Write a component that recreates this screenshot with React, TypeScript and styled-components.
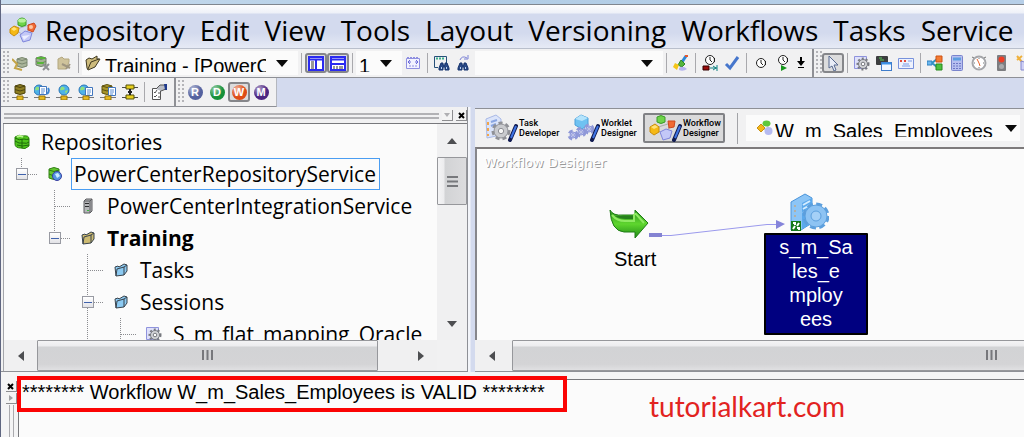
import React from "react";
import styled, { createGlobalStyle, css } from "styled-components";

const GlobalStyle = createGlobalStyle`
  *, *::before, *::after { box-sizing: border-box; }
  body { margin: 0; background: #d3daee; overflow: hidden; }
  button, select { font: inherit; color: inherit; border: 0; margin: 0; padding: 0; background: none; }
  svg { display: block; flex: none; }
`;

const ui = `"Open Sans", "Noto Sans", sans-serif`;
const arial = `"Liberation Sans", Arial, sans-serif`;
const face = "#f1f1f2";
const lavender = "#d3daee";
const paper = "#fbfbfb";
const edge = "#8e9096";

/* ---------- window frame ---------- */

const Window = styled.div`
  position: relative;
  display: flex;
  flex-direction: column;
  height: 100vh;
  min-height: 400px;
  overflow: hidden;
  background: ${lavender};
  border-left: 1px solid #5f6680;
  font-family: ${arial};
  font-size: 20px;
  color: #000;
`;

const TitleStrip = styled.div`
  flex: none;
  height: 5px;
  background: linear-gradient(90deg, #c9dcee, #b2cde6 45%, #b7cfe8);
  border-bottom: 1px solid #80868f;
`;

const MenuBar = styled.nav`
  flex: none;
  display: flex;
  align-items: center;
  gap: 8px;
  height: 44px;
  padding: 6px 0 0 8px;
  overflow: hidden;
  background: linear-gradient(#fdfdfe 0, #eef1f8 8px, ${lavender} 9px, ${lavender} 28px, #e6eaf5 43px);
  border-bottom: 1px solid #b9bfcc;
  font-family: ${ui};
  font-size: 28px;
  line-height: 36px;
`;

const MenuList = styled.div`
  display: flex;
  gap: 15px;
`;

const MenuItem = styled.button`
  flex: none;
`;

/* ---------- toolbars ---------- */

const Toolbar = styled.div<{ $short?: boolean }>`
  flex: none;
  display: flex;
  align-items: center;
  height: 29px;
  padding-left: 1px;
  overflow: hidden;
  background: ${face};
  border-bottom: 1px solid ${edge};
  ${(p) =>
    p.$short &&
    css`
      align-self: flex-start;
      padding-right: 4px;
      border-right: 1px solid #b4b7be;
    `}
`;

const Grip = styled.span`
  flex: none;
  width: 7px;
  height: 24px;
  background: radial-gradient(circle at 1px 1px, #b4b4b8 1px, transparent 1px) 1px 0 / 4px 4px;
`;

const Sep = styled.span`
  flex: none;
  width: 1px;
  height: 20px;
  margin: 0 3px;
  background: #a9a9ad;
`;

const GroupEdge = styled.span`
  flex: none;
  width: 2px;
  height: 28px;
  margin: 0 1px 0 4px;
  background: #8f9095;
`;

const ToolButton = styled.button<{ $pressed?: boolean; $narrow?: boolean }>`
  flex: none;
  display: grid;
  place-items: center;
  width: ${(p) => (p.$narrow ? 14 : 22)}px;
  height: 20px;
  ${(p) =>
    p.$pressed &&
    css`
      background: #dcdcdd;
      border: 2px solid #85868a;
      border-radius: 3px;
    `}
`;

const Combo = styled.label<{ $width: number }>`
  flex: none;
  display: flex;
  align-items: center;
  gap: 4px;
  width: ${(p) => p.$width}px;
  height: 24px;
  padding: 0 10px 0 3px;
  background: ${paper};
`;

const ComboClip = styled.span`
  flex: 1;
  min-width: 0;
  height: 18px;
  margin-right: 6px;
  overflow: hidden;
`;

const ComboSelect = styled.select`
  display: block;
  width: 100%;
  height: 24px;
  appearance: none;
  font-family: ${arial};
  font-size: 20px;
  line-height: 24px;
  outline: none;
`;

const Caret = () => (
  <svg width="12" height="7" viewBox="0 0 12 7">
    <path d="M0 0H12L6 7Z" fill="#0a0a0a" />
  </svg>
);

/* ---------- workspace ---------- */

const Workspace = styled.main`
  flex: 1;
  min-height: 0;
  display: flex;
`;

const Navigator = styled.section`
  flex: none;
  width: 467px;
  display: flex;
  flex-direction: column;
  padding-left: 2px;
  background: ${face};
  border-right: 1px solid ${edge};
  border-bottom: 1px solid ${edge};
`;

const PaneHeader = styled.header`
  flex: none;
  display: flex;
  align-items: center;
  gap: 3px;
  height: 17px;
  padding: 1px 0 0 1px;
  border-bottom: 1px solid #77787c;
`;

const PaneRails = styled.span`
  flex: 1;
  height: 6px;
  border: solid #b2b2b5;
  border-width: 2px 0;
`;

const MiniButton = styled.button`
  flex: none;
  display: grid;
  place-items: center;
  width: 11px;
  height: 11px;
  background: #f4f4f4;
  border: solid #8d8d90;
  border-width: 0 1px 1px 0;
`;

const PaneBody = styled.div`
  flex: 1;
  min-height: 0;
  display: grid;
  grid-template: minmax(0, 1fr) 31px / minmax(0, 1fr) 30px;
  border-left: 1px solid #a4a6ab;
`;

const Tree = styled.ul`
  margin: 0;
  padding: 2px 0 0 1px;
  overflow: hidden;
  list-style: none;
  background: ${paper};
  font-family: ${ui};
  font-size: 21px;
  line-height: 28px;
`;

const TreeRow = styled.li`
  display: flex;
  height: 32px;
  align-items: center;
  white-space: nowrap;
`;

const Slot = styled.span`
  flex: none;
  display: grid;
  place-items: center;
  width: 33px;
  height: 32px;
  > * { grid-area: 1 / 1; }
`;

const Expander = styled.button`
  display: grid;
  place-items: center;
  width: 12px;
  height: 12px;
  background: linear-gradient(#fff, #e2e2e6);
  border: 1px solid #989aa2;
  &::before {
    content: "";
    width: 8px;
    height: 1px;
    background: #3f62ac;
  }
`;

const TreeLabel = styled.span<{ $selected?: boolean; $bold?: boolean }>`
  height: 32px;
  padding: 1px 3px 1px 2px;
  border: 1px solid ${(p) => (p.$selected ? "#4a9df2" : "transparent")};
  font-weight: ${(p) => (p.$bold ? 700 : 400)};
`;

/* ---------- scroll bars ---------- */

const ScrollTrack = styled.div<{ $vertical?: boolean }>`
  display: flex;
  flex-direction: ${(p) => (p.$vertical ? "column" : "row")};
  justify-content: flex-start;
  min-width: 0;
  overflow: hidden;
  background: #f0f0f1;
`;

const ScrollArrow = styled.button<{ $end?: boolean; $wide?: boolean }>`
  flex: none;
  display: grid;
  place-items: center;
  min-height: 31px;
  width: ${(p) => (p.$wide ? 37 : 33)}px;
  ${(p) => p.$wide && "padding-right: 4px;"}
  ${(p) => p.$end && "margin-left: auto;"}
`;

const ScrollArrowV = styled.button<{ $end?: boolean }>`
  flex: none;
  display: grid;
  place-items: center;
  height: 33px;
  ${(p) => p.$end && "margin-top: auto;"}
`;

const Thumb = styled.div<{ $length: number; $vertical?: boolean }>`
  flex: none;
  display: grid;
  place-items: center;
  border: 1px solid #96979b;
  border-radius: 1px;
  ${(p) =>
    p.$vertical
      ? css`
          height: ${p.$length}px;
          background: linear-gradient(90deg, #f4f4f5 0, #ececee 6px, #d2d3d5 7px, #dcdcde);
        `
      : css`
          width: ${p.$length}px;
          background: linear-gradient(#f4f4f5 0, #ececee 5px, #d2d3d5 6px, #d4d4d6 80%, #e0e0e2);
        `}
`;

const GripMarks = ({ vertical }: { vertical?: boolean }) => (
  <svg width="13" height="13" viewBox="0 0 13 13" stroke="#77787c" strokeWidth="2">
    {vertical ? <path d="M1 2H12M1 6.500H12M1 11H12" /> : <path d="M2 1V11M6.500 1V11M11 1V11" />}
  </svg>
);

const Tri = ({ dir }: { dir: "up" | "down" | "left" | "right" }) => {
  const shapes = {
    up: "M1 9H11L6 3Z",
    down: "M1 3H11L6 9Z",
    left: "M9 1V11L3 6Z",
    right: "M3 1V11L9 6Z",
  };
  return (
    <svg width="12" height="12" viewBox="0 0 12 12">
      <path d={shapes[dir]} fill="#4d4e51" />
    </svg>
  );
};

/* ---------- designer ---------- */

const Splitter = styled.div`
  flex: none;
  width: 7px;
  background: linear-gradient(90deg, #f3f5fa 2px, ${lavender} 3px);
`;

const Designer = styled.section`
  flex: 1;
  min-width: 0;
  display: grid;
  grid-template-rows: 38px minmax(0, 1fr) 31px;
  margin-top: 1px;
  border-top: 1px solid ${edge};
  border-bottom: 1px solid ${edge};
`;

const DesignerBar = styled.div`
  display: flex;
  align-items: center;
  min-width: 0;
  overflow: hidden;
  padding: 0 4px;
  background: ${face};
`;

const ModeButton = styled.button<{ $pressed?: boolean }>`
  flex: none;
  display: flex;
  align-items: center;
  gap: 1px;
  width: 82px;
  height: 30px;
  padding: 0 2px 0 4px;
  text-align: left;
  font-family: Roboto, sans-serif;
  font-size: 9px;
  font-weight: 500;
  line-height: 10px;
  border: 2px solid transparent;
  border-radius: 2px;
  ${(p) =>
    p.$pressed &&
    css`
      background: #dadadb;
      border-color: #808185;
    `}
`;

const DesignerSep = styled.span`
  flex: none;
  width: 1px;
  height: 31px;
  margin: 0 8px 0 12px;
  background: #a2a3a7;
`;

const WorkflowCombo = styled.label`
  flex: 1;
  display: flex;
  align-items: center;
  gap: 2px;
  height: 26px;
  padding: 0 3px 0 11px;
  background: ${paper};
`;

const Canvas = styled.div`
  position: relative;
  overflow: hidden;
  background: ${paper};
  border-top: 2px solid #7d7a7b;
  border-left: 2px solid #86868b;
`;

const CanvasTitle = styled.span`
  position: absolute;
  left: 7px;
  top: 4px;
  font-family: "DejaVu Sans", sans-serif;
  font-size: 13px;
  line-height: 20px;
  color: #fff;
  text-shadow: 1px 1px 0 #9a9a9a;
`;

const Node = styled.div<{ $x: number; $y: number }>`
  position: absolute;
  left: ${(p) => p.$x}px;
  top: ${(p) => p.$y}px;
  display: flex;
  flex-direction: column;
  align-items: center;
`;

const StartLabel = styled.span`
  margin-top: 8px;
  padding-left: 12px;
  line-height: 24px;
`;

const TaskPicture = styled.span`
  padding-right: 15px;
`;

const TaskLabel = styled.span`
  width: 104px;
  height: 102px;
  border: 2px solid #000;
  border-radius: 1px;
  background: #000080;
  color: #fff;
  line-height: 24px;
  text-align: center;
  white-space: pre-line;
`;

const Link = styled.svg`
  position: absolute;
  left: 172px;
  top: 69px;
`;

/* ---------- output window ---------- */

const Output = styled.section`
  flex: none;
  display: flex;
  height: 65px;
  padding-top: 7px;
  background: #f4f4f5;
`;

const OutputRail = styled.div`
  flex: none;
  display: flex;
  flex-direction: column;
  align-items: center;
  gap: 1px;
  width: 17px;
  padding: 2px 0 0 3px;
`;

const RailLines = styled.span`
  flex: 1;
  width: 5px;
  border: solid #aaaaae;
  border-width: 0 1px;
`;

const OutputText = styled.output`
  flex: 1;
  min-width: 0;
  padding: 0 3px;
  background: ${paper};
  border-top: 1px solid #77787c;
  border-left: 1px solid #77787c;
  line-height: 24px;
  white-space: nowrap;
`;

const Highlight = styled.div`
  position: absolute;
  left: 16px;
  bottom: 25px;
  width: 550px;
  height: 36px;
  border: 4px solid #fb0404;
`;

const Credit = styled.span`
  position: absolute;
  left: 648px;
  bottom: 15px;
  font-family: Lato, sans-serif;
  font-size: 28px;
  line-height: 32px;
  color: #e2231f;
`;

/* ---------- icons ---------- */

const I = ({ children, size = 16 }: { children: React.ReactNode; size?: number }) => (
  <svg width={size} height={size} viewBox="0 0 16 16" fill="none">
    {children}
  </svg>
);

const Cyl = ({ fill, line, x = 0, y = 0 }: { fill: string; line: string; x?: number; y?: number }) => (
  <g transform={`translate(${x} ${y})`}>
    <path d="M2 3Q7 0 12 3V10Q7 13 2 10Z" fill={fill} stroke={line} />
    <path d="M2 3Q7 6 12 3M2 6.500Q7 9.500 12 6.500" stroke={line} />
  </g>
);

const AppLogo = ({ size = 28 }: { size?: number }) => (
  <svg width={size} height={size} viewBox="0 0 28 28">
    <path d="M8 13L20 9L17 21L7 14" fill="none" stroke="#b0b4c4" />
    <path d="M9 4Q13 0 17 4V9Q13 12 9 9Z" fill="#6fd449" stroke="#3d9c2c" />
    <ellipse cx="13" cy="4.500" rx="4" ry="2" fill="#b7f29b" />
    <path d="M1 13L5 10L10 12L9 17L5 20L1 17Z" fill="#f5b915" stroke="#c98d0c" />
    <path d="M2 13L5 11L8 13L5 15Z" fill="#ffe27a" />
    <path d="M19 9L25 7L27 10L24 16L19 14Z" fill="#f06a35" stroke="#cc481f" />
    <circle cx="22" cy="11" r="2" fill="#ffc5a0" />
    <path d="M11 19L16 15L23 17L21 24L14 26Z" fill="#c3c8f7" stroke="#7f86dc" />
    <path d="M13 20L21 19L15 24Z" fill="#eceeff" />
  </svg>
);

const Connect = () => (
  <I>
    <Cyl fill="#aab59a" line="#7b8870" x={3} y={1} />
    <path d="M0 4L5 9L3 13L10 15" stroke="#c3a448" strokeWidth="2" />
  </I>
);
const Disconnect = () => (
  <I>
    <Cyl fill="#a4b394" line="#6f8068" y={0} />
    <path d="M3 3H11M3 8H10" stroke="#58b53a" strokeWidth="2" />
    <path d="M9 9L15 15M15 9L9 15" stroke="#8f9093" strokeWidth="2" />
  </I>
);
const FolderGray = () => (
  <I>
    <path d="M2 4L6 2L8 4H13V7L10 14H2Z" fill="#cfc39b" stroke="#b3a77f" />
    <path d="M6 9L14 13M10 14L14 9" stroke="#9f9680" strokeWidth="2" />
  </I>
);
const FolderOpen = () => (
  <I>
    <path d="M2 13L1 5L4 3L7 4L12 1V4L15 4L10 12L3 15Z" fill="#cdbb7c" stroke="#3f3820" />
    <path d="M3 14L6 7L14 4" stroke="#3f3820" />
  </I>
);
const Folder = ({ fill }: { fill: string }) => (
  <I>
    <path d="M2 5L5 4L6 5L11 2L14 3V9L11 13L3 14Z" fill={fill} stroke="#39434c" />
    <path d="M3 14L4 7L11 5L14 3M11 5V13" stroke="#39434c" />
  </I>
);
const PaneLeft = () => (
  <I>
    <path d="M1 2H15V15H1Z" fill="#fff" stroke="#2a2af0" strokeWidth="2" />
    <path d="M1 4.500H15M8 4V15" stroke="#2a2af0" strokeWidth="2" />
    <path d="M3 7H6M3 9H6M3 11H6M3 13H6" stroke="#333" />
  </I>
);
const PaneBottom = () => (
  <I>
    <path d="M1 2H15V15H1Z" fill="#fff" stroke="#2a2af0" strokeWidth="2" />
    <path d="M1 4.500H15M1 9H15" stroke="#2a2af0" strokeWidth="2" />
    <path d="M4 11V14M7 11V14M10 11V14M12 11V14" stroke="#333" />
  </I>
);
const FitPage = () => (
  <I>
    <path d="M1.500 3.500H14.500V13.500H1.500Z" fill="#f3f3ff" stroke="#8f8fe0" />
    <path d="M2 2.500H14" stroke="#8f8fe0" strokeDasharray="2 1" />
    <path d="M3 7H6M5 5L3 7L5 9M13 7H10M11 5L13 7L11 9" stroke="#6b6bd8" />
    <path d="M4 11H12" stroke="#8f8fe0" strokeDasharray="2 1" />
  </I>
);
const Binoc = () => (
  <path d="M7 8H9V10H11V8H13L15 13V15H11V12H9V15H5V13Z" fill="#2b4a86" stroke="#17346e" />
);
const FindWindow = () => (
  <I>
    <path d="M.500 1.500H12.500V8M.500 1.500V12.500H4" fill="none" stroke="#27507a" />
    <path d="M2 3.500H11" stroke="#3bb08c" strokeWidth="2" strokeDasharray="2 1" />
    <Binoc />
    <path d="M7 13H8M12 13H13" stroke="#b9d2f5" strokeWidth="2" />
  </I>
);
const FindNext = () => (
  <I>
    <path d="M4 5Q6 0 11 3M12 0V4H8" stroke="#7c83d6" />
    <g transform="translate(-3 0)">
      <Binoc />
      <path d="M7 13H8M12 13H13" stroke="#b9d2f5" strokeWidth="2" />
    </g>
  </I>
);
const Brush = () => (
  <I>
    <path d="M13 1L9 7" stroke="#2c87d8" strokeWidth="3" />
    <path d="M12 1L15 1" stroke="#e5572d" strokeWidth="2" />
    <path d="M8 5L12 9L9 12L5 10Z" fill="#54b53c" stroke="#2f8527" />
    <path d="M2 8L6 10L4 15L0 12Z" fill="#f5c518" />
    <path d="M6 13Q10 10 14 14Q10 17 6 15Z" fill="#b5b4ee" />
  </I>
);
const ClockFace = ({ y = 0, r = 4.5 }: { y?: number; r?: number }) => (
  <g transform={`translate(0 ${y})`}>
    <circle cx="8" cy="8" r={r} fill="#fff" stroke="#222" strokeWidth="1" />
    <path d="M8 5V8L10 10M12.500 6V10" stroke="#222" />
  </g>
);
const Schedule = () => (
  <I>
    <ClockFace y={-3} />
    <path d="M1 11H7V15H1Z" fill="#9b0d0d" stroke="#300" />
    <path d="M8 13H15M11 11L14 13L11 15M15 10V16" stroke="#0e8080" />
  </I>
);
const Check = () => (
  <I>
    <path d="M2 9L6 13L14 2" stroke="#4676cc" strokeWidth="3" />
  </I>
);
const Clock = () => (
  <I>
    <ClockFace />
  </I>
);
const ClockPlay = () => (
  <I>
    <ClockFace y={-3} />
    <path d="M6 10L12 13L6 16Z" fill="#17971c" />
  </I>
);
const Download = () => (
  <svg width="12" height="16" viewBox="2 0 12 16">
    <path d="M8 2V9" stroke="#000" strokeWidth="2" />
    <path d="M4 6H12L8 11Z" fill="#000" />
    <path d="M5 12.500H11" stroke="#000" />
  </svg>
);
const Pointer = () => (
  <I>
    <path d="M4 1V13L7 11L9 16L11 15L9 10H13Z" fill="#e9edf7" stroke="#56688f" />
  </I>
);
const Gear = ({ x = 8, y = 8, fill = "#d3d4d8", line = "#77797f" }) => (
  <g transform={`translate(${x} ${y})`}>
    <circle r="5.500" stroke={line} strokeWidth="2" strokeDasharray="2 2" />
    <circle r="4.500" fill={fill} stroke={line} />
    <circle r="1.800" fill="#fff" stroke={line} />
  </g>
);
const SessionIcon = () => (
  <I>
    <path d="M.500 1.500H12.500V13.500H.500Z" fill="#dfe1fb" stroke="#8f93dd" />
    <Gear x={9} y={9} />
  </I>
);
const Command = () => (
  <I>
    <rect x="0" y="1" width="12" height="9" rx="1" fill="#3c3d3f" />
    <path d="M3 3H6M4 5H8" stroke="#58d058" />
    <rect x="5.500" y="7.500" width="10" height="8" fill="#f0f7ff" stroke="#3f7ccb" />
    <path d="M6 8.500H15" stroke="#3b92e6" strokeWidth="2" />
  </I>
);
const Email = () => (
  <I>
    <path d="M.500 3.500H15.500V13.500H.500Z" fill="#eef2fd" stroke="#7892dc" />
    <path d="M2 6H4M6 6H8" stroke="#e14a3b" strokeWidth="2" />
    <path d="M10 6H14M5 9H11M4 11H12" stroke="#7b9ce6" />
  </I>
);
const Decision = () => (
  <I>
    <path d="M0 6H5V10H0Z" fill="#6bb7ef" stroke="#2e7fbb" />
    <path d="M5 8L10 4M5 8L10 12" stroke="#2f90c4" strokeWidth="2" />
    <path d="M9 1H15V7H9Z" fill="#f37b32" stroke="#cf5212" />
    <path d="M9 9H15V15H9Z" fill="#4dc03f" stroke="#268a1d" />
  </I>
);
const Calc = () => (
  <I>
    <rect x="2.500" y=".500" width="11" height="15" rx="1" fill="#b7bff0" stroke="#7a84cc" />
    <path d="M4 4H12" stroke="#5e9ee0" strokeWidth="3" />
    <path d="M4 8.500H12M4 11H12M4 13.500H12" stroke="#6d76c4" strokeWidth="1" strokeDasharray="2 1" />
  </I>
);
const Timer = () => (
  <I>
    <circle cx="8" cy="8" r="6.500" fill="#fff" stroke="#a5a6aa" strokeWidth="2" />
    <path d="M8 8L6 4M8 8L9 11" stroke="#e8622b" />
    <path d="M8 3V4M13 8H12M8 13V12M3 8H4M1 2L3 3M15 2L13 3" stroke="#777" />
  </I>
);
const Light = () => (
  <I>
    <rect x="4" y="0" width="9" height="16" rx="1" fill="#7c7d80" />
    <circle cx="8.500" cy="4.500" r="3" fill="#ee3d25" />
    <circle cx="8.500" cy="11.500" r="2.500" fill="#a9aaac" />
  </I>
);
const Wand = () => (
  <I>
    <path d="M2 1L7 7M7 1L2 5" stroke="#efb13d" strokeWidth="2" />
    <path d="M6 6L16 9V15H6Z" fill="#cfd0f4" stroke="#8488d0" />
  </I>
);

const Pipe = () => (
  <>
    <path d="M0 13.500H16" stroke="#77787b" />
    <path d="M5 12H11V16H5Z" fill="#e6b91e" stroke="#96760f" />
  </>
);
const Globe = ({ x = 7, y = 6, r = 5 }) => (
  <g transform={`translate(${x} ${y})`}>
    <circle r={r} fill="#4eb2e8" stroke="#2a76b8" />
    <path d="M-3 -3Q0 -4 1 -1Q-2 1 -4 0Z" fill="#8fe07c" />
    <path d="M1 1L4 0L2 4Z" fill="#8fe07c" />
  </g>
);
const Db = () => (
  <I>
    <g transform="translate(1 -1)">
      <Cyl fill="#8d7d21" line="#4e450f" />
    </g>
    <Pipe />
  </I>
);
const Doc = ({ x = 7, y = 3 }) => (
  <g transform={`translate(${x} ${y})`}>
    <path d="M.500 .500H7.500V8.500H.500Z" fill="#fff" stroke="#4176be" />
    <path d="M2 3H6M2 5H6M2 7H5" stroke="#5c8fd3" />
  </g>
);
const GlobeDocs = () => (
  <I>
    <Globe x={5} />
    <Doc x={5} y={2} />
    <Pipe />
    <path d="M14 4Q16 7 13 10" stroke="#3b86d4" strokeWidth="2" />
  </I>
);
const GlobePipe = () => (
  <I>
    <Globe x={8} />
    <Pipe />
  </I>
);
const GlobeDoc = () => (
  <I>
    <Globe x={6} />
    <Doc x={7} y={3} />
    <Pipe />
  </I>
);
const DbDoc = () => (
  <I>
    <g transform="translate(0 -1)">
      <Cyl fill="#a8962a" line="#5e5312" />
    </g>
    <Doc x={8} y={3} />
    <Pipe />
  </I>
);
const Beam = () => (
  <I>
    <path d="M0 3.500H16M0 13.500H16" stroke="#4b4b4b" />
    <path d="M4 1H12V5H4ZM4 11H12V15H4Z" fill="#e6cf1e" stroke="#55500b" />
    <path d="M8 5V11M6 8H10" stroke="#222" strokeWidth="2" />
  </I>
);
const Props = () => (
  <I>
    <path d="M1.500 4.500H9.500V15.500H1.500Z" fill="#fff" stroke="#555" />
    <path d="M3 8L4 9L6 6M3 12L4 13L6 11M7 9H9M7 13H9" stroke="#555" />
    <path d="M5 5L9 1L15 1V5L10 7" fill="#b9bcc4" stroke="#555" />
    <path d="M13 0H16V6H14" fill="#1f3a8c" />
  </I>
);

const Badge = styled.span<{ $color: string }>`
  display: grid;
  place-items: center;
  width: 15px;
  height: 15px;
  border-radius: 8px;
  background: radial-gradient(circle at 5px 4px, #ffffff90, transparent 8px), ${(p) => p.$color};
  color: #fff;
  font-size: 11px;
  font-weight: 700;
  line-height: 15px;
`;

const RepoRoot = () => (
  <I>
    <path d="M1 3Q5 0 9 2Q15 1 15 5V12Q11 16 7 14Q1 14 1 10Z" fill="#4fc51c" stroke="#2b7f0e" />
    <path d="M1 4Q5 7 10 5Q13 6 15 5M1 7Q5 10 9 9Q13 10 15 8M3 11Q8 13 15 11M8 5V14" stroke="#1d6b0a" />
    <path d="M3 3Q6 1 9 3" stroke="#b9f58f" strokeWidth="2" />
  </I>
);
const RepoService = () => (
  <I>
    <path d="M2 3Q7 0 12 3V12Q7 15 2 12Z" fill="#62c62d" stroke="#35831a" />
    <path d="M2 4Q7 7 12 4M2 8Q5 10 8 9" stroke="#2b7a12" />
    <circle cx="10" cy="10" r="4.500" fill="#5495e0" stroke="#3a3fa0" />
    <path d="M8 8L11 7L13 10L10 12Z" fill="#c9ecff" />
  </I>
);
const Server = () => (
  <I>
    <path d="M4 3L6 1H12V13L10 15H4Z" fill="#b5b6b9" stroke="#5c5d60" />
    <path d="M4 3H10V15M10 3L12 1" stroke="#5c5d60" />
    <path d="M5 5.500H9M5 8.500H9" stroke="#2d2d2f" />
    <path d="M7 12.500H9" stroke="#36b93a" />
  </I>
);

const Pen = () => (
  <g>
    <path d="M27 27L33 13" stroke="#101a50" strokeWidth="4" strokeLinecap="round" />
    <path d="M28 25L33 13" stroke="#3f74e4" strokeWidth="2" />
  </g>
);
const BigGear = ({ x, y, r, fill, line }: { x: number; y: number; r: number; fill: string; line: string }) => (
  <g transform={`translate(${x} ${y})`}>
    <circle r={r} fill="none" stroke={line} strokeWidth="3" strokeDasharray="4 3" />
    <circle r={r - 1} fill={fill} stroke={line} />
    <circle r={r / 3} fill="#f6f6f6" stroke={line} />
  </g>
);
const ModeSvg = ({ children }: { children: React.ReactNode }) => (
  <svg width="33" height="28" viewBox="2 1 33 28" fill="none">
    {children}
    <Pen />
  </svg>
);
const TaskMode = () => (
  <ModeSvg>
    <path d="M3 6L13 2L18 6V22L4 25Z" fill="#dbe4fa" stroke="#a9b9e6" />
    <path d="M5 9V12M5 15V18M5 21V23" stroke="#f2a549" strokeWidth="2" />
    <path d="M8 9L14 7M8 13L13 11" stroke="#8aa6e2" strokeWidth="2" />
    <BigGear x={18} y={18} r={8} fill="#c9cace" line="#909197" />
  </ModeSvg>
);
const WorkletMode = () => (
  <ModeSvg>
    <path d="M10 6L16 2L23 5V12L17 16L10 12Z" fill="#6fc2f2" stroke="#4a9fda" />
    <path d="M10 6L17 8L23 5L16 2Z" fill="#b5e4fc" />
    <BigGear x={8} y={22} r={4} fill="#bcc3f0" line="#8f98d8" />
    <BigGear x={16} y={19} r={4} fill="#bcc3f0" line="#8f98d8" />
    <BigGear x={24} y={16} r={4} fill="#bcc3f0" line="#8f98d8" />
  </ModeSvg>
);
const WorkflowMode = () => (
  <ModeSvg>
    <path d="M8 15L24 10L18 23Z" stroke="#aaa" />
    <path d="M10 4Q14 1 18 4V9Q14 12 10 9Z" fill="#6fd449" stroke="#3d9c2c" />
    <path d="M3 14L8 11L12 14V19L7 22L3 19Z" fill="#f5b915" stroke="#c98d0c" />
    <path d="M4 14L8 12L11 14L7 16Z" fill="#ffe27a" />
    <path d="M21 8L28 8L27 14L22 15Z" fill="#f06a35" stroke="#cc481f" />
    <path d="M13 19L19 16L25 18L23 25L16 27Z" fill="#c3c8f7" stroke="#7f86dc" />
  </ModeSvg>
);
const WorkflowIcon = () => (
  <I>
    <path d="M5 8L10 3L12 11Z" stroke="#aaa" />
    <ellipse cx="9.500" cy="3.500" rx="4" ry="3" fill="#5fc83c" />
    <path d="M0 8L4 4L8 8L4 12Z" fill="#f3b61a" stroke="#c88f10" />
    <circle cx="11.500" cy="11" r="4" fill="#b5baf0" />
  </I>
);

const StartIcon = () => (
  <svg width="40" height="30" viewBox="0 0 40 30">
    <defs>
      <linearGradient id="go" x1="0" y1="0" x2="0" y2="1">
        <stop offset="0" stopColor="#2c9320" />
        <stop offset=".5" stopColor="#5fd62e" />
        <stop offset="1" stopColor="#1f8a16" />
      </linearGradient>
    </defs>
    <path d="M1 1Q4 7 14 6H26V1L39 14L26 29V23H15Q2 22 1 1Z" fill="url(#go)" stroke="#1f7d17" />
    <path d="M3 6Q8 12 16 12H25V6Q27 4 27 5L35 14" fill="none" stroke="#8eea62" strokeWidth="2" />
    <path d="M14 7H24V10H17Q10 10 6 7Z" fill="#26801c" />
  </svg>
);

const TaskIcon = () => (
  <svg width="40" height="40" viewBox="0 0 40 40">
    <path d="M2 9L16 1L23 5V30L12 37H2Z" fill="#8cc5f6" stroke="#4a94da" />
    <path d="M13 10L23 5V30L13 36Z" fill="#5ba9ec" />
    <path d="M14 12L21 8M14 16L21 12M14 20L20 17" stroke="#d4ecff" strokeWidth="2" />
    <path d="M6 12V26" stroke="#d79a55" strokeDasharray="2 3" />
    <circle cx="27" cy="23" r="12" fill="none" stroke="#5c9fdd" strokeWidth="3" strokeDasharray="6 3.400" />
    <circle cx="27" cy="23" r="11" fill="#8dc3f3" stroke="#5c9fdd" />
    <circle cx="27" cy="23" r="5" fill="#a5d0f7" stroke="#5c9fdd" />
    <rect x="2" y="28" width="10" height="10" fill="#157a1b" />
    <path d="M4 30H6V32M10 30L8 33M4 36L6 33M8 35H10V37" stroke="#fff" fill="none" strokeWidth="2" />
  </svg>
);

/* ---------- data ---------- */

const menus = ["Repository", "Edit", "View", "Tools", "Layout", "Versioning", "Workflows", "Tasks", "Service"];

type Guide = "blank" | "line" | "tee" | "minus" | "minusOn";
type RowData = { label: string; icon: React.ReactNode; guides: Guide[]; bold?: boolean; selected?: boolean };

const rows: RowData[] = [
  { label: "Repositories", icon: <RepoRoot />, guides: [] },
  { label: "PowerCenterRepositoryService", icon: <RepoService />, guides: ["minus"], selected: true },
  { label: "PowerCenterIntegrationService", icon: <Server />, guides: ["blank", "tee"] },
  { label: "Training", icon: <Folder fill="#cdbb72" />, guides: ["blank", "minus"], bold: true },
  { label: "Tasks", icon: <Folder fill="#8ccaf2" />, guides: ["blank", "blank", "tee"] },
  { label: "Sessions", icon: <Folder fill="#8ccaf2" />, guides: ["blank", "blank", "minusOn"] },
  { label: "S_m_flat_mapping_Oracle", icon: <SessionIcon />, guides: ["blank", "blank", "line", "tee"] },
];

const guidePath: Record<Guide, string> = {
  blank: "",
  line: "M16.500 0V32",
  tee: "M16.500 0V32M17 16.500H33",
  minus: "M16.500 0V16M17 16.500H33",
  minusOn: "M16.500 0V32M17 16.500H33",
};

const TreeGuide = ({ kind }: { kind: Guide }) => (
  <Slot>
    <svg width="33" height="32" viewBox="0 0 33 32" fill="none">
      <path d={guidePath[kind]} stroke="#8b8c90" strokeDasharray="1 1" />
    </svg>
    {kind.startsWith("minus") && <Expander aria-label="Collapse" />}
  </Slot>
);

type Tool = { name: string; icon: React.ReactNode; pressed?: boolean; narrow?: boolean };
const Tools = ({ items }: { items: Tool[] }) => (
  <>
    {items.map((t) => (
      <ToolButton key={t.name} aria-label={t.name} $pressed={t.pressed} $narrow={t.narrow}>
        {t.icon}
      </ToolButton>
    ))}
  </>
);

const ComboBox = ({ name, value, icon, width }: { name: string; value: string; icon?: React.ReactNode; width: number }) => (
  <Combo $width={width}>
    {icon}
    <ComboClip>
      <ComboSelect aria-label={name}>
        <option>{value}</option>
      </ComboSelect>
    </ComboClip>
    <Caret />
  </Combo>
);

export default function App() {
  return (
    <Window>
      <GlobalStyle />
      <TitleStrip />
      <MenuBar>
        <AppLogo />
        <MenuList>
          {menus.map((m) => (
            <MenuItem key={m}>{m}</MenuItem>
          ))}
        </MenuList>
      </MenuBar>

      <Toolbar>
        <Grip />
        <Tools
          items={[
            { name: "Connect", icon: <Connect /> },
            { name: "Disconnect", icon: <Disconnect /> },
            { name: "Close folder", icon: <FolderGray /> },
          ]}
        />
        <Sep />
        <ComboBox name="Folder" value="Training - [PowerCenter]" icon={<FolderOpen />} width={216} />
        <Sep />
        <Tools
          items={[
            { name: "Navigator", icon: <PaneLeft />, pressed: true },
            { name: "Output", icon: <PaneBottom />, pressed: true },
          ]}
        />
        <Sep />
        <ComboBox name="Zoom" value="1" width={46} />
        <Tools items={[{ name: "Fit", icon: <FitPage /> }]} />
        <Sep />
        <Tools
          items={[
            { name: "Find in workspace", icon: <FindWindow /> },
            { name: "Find next", icon: <FindNext /> },
          ]}
        />
        <ComboBox name="Find" value="" width={188} />
        <Sep />
        <Tools items={[{ name: "Format", icon: <Brush /> }]} />
        <Sep />
        <Tools
          items={[
            { name: "Scheduler", icon: <Schedule /> },
            { name: "Validate", icon: <Check /> },
          ]}
        />
        <Sep />
        <Tools
          items={[
            { name: "Schedule", icon: <Clock /> },
            { name: "Start at time", icon: <ClockPlay /> },
            { name: "Download", icon: <Download />, narrow: true },
          ]}
        />
        <GroupEdge />
        <Grip />
        <Tools items={[{ name: "Select", icon: <Pointer />, pressed: true }]} />
        <Sep />
        <Tools
          items={[
            { name: "Session", icon: <SessionIcon /> },
            { name: "Command", icon: <Command /> },
            { name: "Email", icon: <Email /> },
          ]}
        />
        <Sep />
        <Tools
          items={[
            { name: "Decision", icon: <Decision /> },
            { name: "Assignment", icon: <Calc /> },
            { name: "Timer", icon: <Timer /> },
            { name: "Control", icon: <Light /> },
            { name: "Event", icon: <Wand /> },
          ]}
        />
      </Toolbar>

      <Toolbar $short>
        <Grip />
        <Tools
          items={[
            { name: "Repository", icon: <Db /> },
            { name: "Shared objects", icon: <GlobeDocs /> },
            { name: "Web service", icon: <GlobePipe /> },
            { name: "Web document", icon: <GlobeDoc /> },
            { name: "Repository document", icon: <DbDoc /> },
            { name: "Connections", icon: <Beam /> },
          ]}
        />
        <Sep />
        <Tools items={[{ name: "Properties", icon: <Props /> }]} />
        <GroupEdge />
        <Grip />
        <Tools
          items={[
            { name: "Repository Manager", icon: <Badge $color="#54619f">R</Badge> },
            { name: "Designer", icon: <Badge $color="#17913a">D</Badge> },
            { name: "Workflow Manager", icon: <Badge $color="#df4c16">W</Badge>, pressed: true },
            { name: "Workflow Monitor", icon: <Badge $color="#4c2582">M</Badge> },
          ]}
        />
      </Toolbar>

      <Workspace>
        <Navigator>
          <PaneHeader>
            <PaneRails />
            <MiniButton aria-label="Menu">
              <svg width="6" height="4" viewBox="0 0 6 4">
                <path d="M0 0H6L3 4Z" fill="#b0b0b3" />
              </svg>
            </MiniButton>
            <MiniButton aria-label="Close">
              <svg width="7" height="7" viewBox="0 0 7 7">
                <path d="M1 1L6 6M6 1L1 6" stroke="#000" strokeWidth="2" />
              </svg>
            </MiniButton>
          </PaneHeader>
          <PaneBody>
            <Tree>
              {rows.map((r) => (
                <TreeRow key={r.label}>
                  {r.guides.map((g, i) => (
                    <TreeGuide key={i} kind={g} />
                  ))}
                  <Slot>{r.icon}</Slot>
                  <TreeLabel $bold={r.bold} $selected={r.selected}>
                    {r.label}
                  </TreeLabel>
                </TreeRow>
              ))}
            </Tree>
            <ScrollTrack $vertical>
              <ScrollArrowV aria-label="Scroll up">
                <Tri dir="up" />
              </ScrollArrowV>
              <Thumb $vertical $length={48}>
                <GripMarks vertical />
              </Thumb>
              <ScrollArrowV $end aria-label="Scroll down">
                <Tri dir="down" />
              </ScrollArrowV>
            </ScrollTrack>
            <ScrollTrack>
              <ScrollArrow aria-label="Scroll left">
                <Tri dir="left" />
              </ScrollArrow>
              <Thumb $length={341}>
                <GripMarks />
              </Thumb>
              <ScrollArrow $end aria-label="Scroll right">
                <Tri dir="right" />
              </ScrollArrow>
            </ScrollTrack>
          </PaneBody>
        </Navigator>

        <Splitter />

        <Designer>
          <DesignerBar>
            <ModeButton>
              <TaskMode />
              <span>
                Task
                <br />
                Developer
              </span>
            </ModeButton>
            <ModeButton>
              <WorkletMode />
              <span>
                Worklet
                <br />
                Designer
              </span>
            </ModeButton>
            <ModeButton $pressed>
              <WorkflowMode />
              <span>
                Workflow
                <br />
                Designer
              </span>
            </ModeButton>
            <DesignerSep />
            <WorkflowCombo>
              <WorkflowIcon />
              <ComboClip>
                <ComboSelect aria-label="Workflow">
                  <option>W_m_Sales_Employees</option>
                </ComboSelect>
              </ComboClip>
              <Caret />
            </WorkflowCombo>
          </DesignerBar>
          <Canvas>
            <CanvasTitle>Workflow Designer</CanvasTitle>
            <Link width="142" height="24" viewBox="0 0 142 24">
              <rect x="0" y="15" width="13" height="4" fill="#8483d2" />
              <path d="M13 17.500H22L118 6.500H130" fill="none" stroke="#9b9aed" />
              <path d="M127 2L136 6L127 11Z" fill="#8584da" />
            </Link>
            <Node $x={125} $y={60}>
              <StartIcon />
              <StartLabel>Start</StartLabel>
            </Node>
            <Node $x={287} $y={44}>
              <TaskPicture>
                <TaskIcon />
              </TaskPicture>
              <TaskLabel>{"s_m_Sa\nles_e\nmploy\nees"}</TaskLabel>
            </Node>
          </Canvas>
          <ScrollTrack>
            <ScrollArrow $wide aria-label="Scroll left">
              <Tri dir="left" />
            </ScrollArrow>
            <Thumb $length={958}>
              <GripMarks />
            </Thumb>
          </ScrollTrack>
        </Designer>
      </Workspace>

      <Output>
        <OutputRail>
          <MiniButton aria-label="Close output">
            <svg width="7" height="7" viewBox="0 0 7 7">
              <path d="M1 1L6 6M6 1L1 6" stroke="#000" strokeWidth="2" />
            </svg>
          </MiniButton>
          <MiniButton aria-label="Expand output">
            <svg width="4" height="6" viewBox="0 0 4 6">
              <path d="M0 0V6L4 3Z" fill="#a0a0a3" />
            </svg>
          </MiniButton>
          <RailLines />
        </OutputRail>
        <OutputText>******** Workflow W_m_Sales_Employees is VALID ********</OutputText>
      </Output>
      <Highlight />
      <Credit>tutorialkart.com</Credit>
    </Window>
  );
}
